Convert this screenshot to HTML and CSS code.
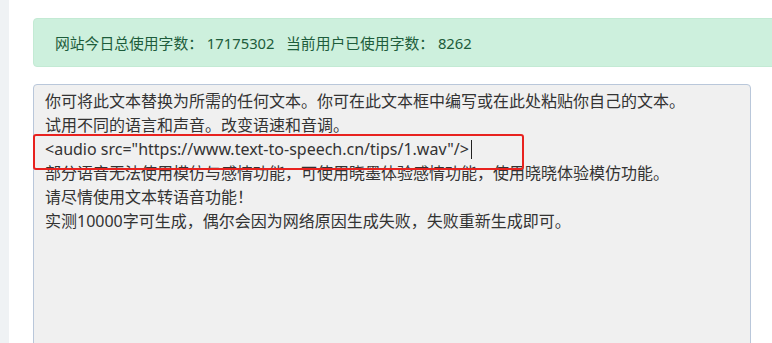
FILE: index.html
```html
<!DOCTYPE html>
<html lang="zh-CN">
<head>
<meta charset="utf-8">
<link rel="stylesheet" href="styles.css">
</head>
<body>
<div class="page">
  <aside class="side"></aside>
  <main class="main">
    <div class="alert">网站今日总使用字数： 17175302&nbsp;&nbsp;&nbsp;当前用户已使用字数： 8262</div>
    <div class="editor">
      <div class="line">你可将此文本替换为所需的任何文本。你可在此文本框中编写或在此处粘贴你自己的文本。</div>
      <div class="line">试用不同的语言和声音。改变语速和音调。</div>
      <div class="line">&lt;audio src="https://www.text-to-speech.cn/tips/1.wav"/&gt;<span class="caret"></span></div>
      <div class="line">部分语音无法使用模仿与感情功能，可使用晓墨体验感情功能，使用晓晓体验模仿功能。</div>
      <div class="line">请尽情使用文本转语音功能！</div>
      <div class="line">实测10000字可生成，偶尔会因为网络原因生成失败，失败重新生成即可。</div>
      <div class="highlight"></div>
    </div>
  </main>
</div>
</body>
</html>
```
FILE: styles.css
```css
html, body {
  margin: 0;
  padding: 0;
  background: #ffffff;
  overflow: hidden;
}
.page {
  display: flex;
  height: 343px;
  overflow: hidden;
  font-family: "Noto Sans", "Noto Sans CJK SC", sans-serif;
}
.side {
  width: 9px;
  flex: none;
  background: #eff2f4;
}
.main {
  flex: 1;
  padding: 18px 0 0 24px;
  min-width: 0;
  overflow: hidden;
}
.alert {
  background: #cdf0dd;
  color: #1d5c3b;
  border: 1px solid #c3ead4;
  border-radius: 4px;
  box-sizing: border-box;
  height: 49px;
  padding: 0 21px;
  display: flex;
  align-items: center;
  font-size: 14.8px;
  margin-right: -10px;
  white-space: nowrap;
}
.editor {
  position: relative;
  margin-top: 17px;
  margin-right: 21px;
  height: 280px;
  background: #f0f0f0;
  border: 1px solid #b9c7da;
  border-radius: 4px;
  padding: 5px 11px;
  color: #333333;
  font-size: 16px;
  line-height: 23.9px;
}
.line {
  white-space: nowrap;
}
.caret {
  display: inline-block;
  width: 1px;
  height: 19px;
  margin-left: 2px;
  background: #222;
  vertical-align: -4px;
}
.highlight {
  position: absolute;
  left: -1px;
  top: 49px;
  width: 487px;
  height: 32px;
  border: 2.5px solid #e8221f;
  border-radius: 3px;
}
```
